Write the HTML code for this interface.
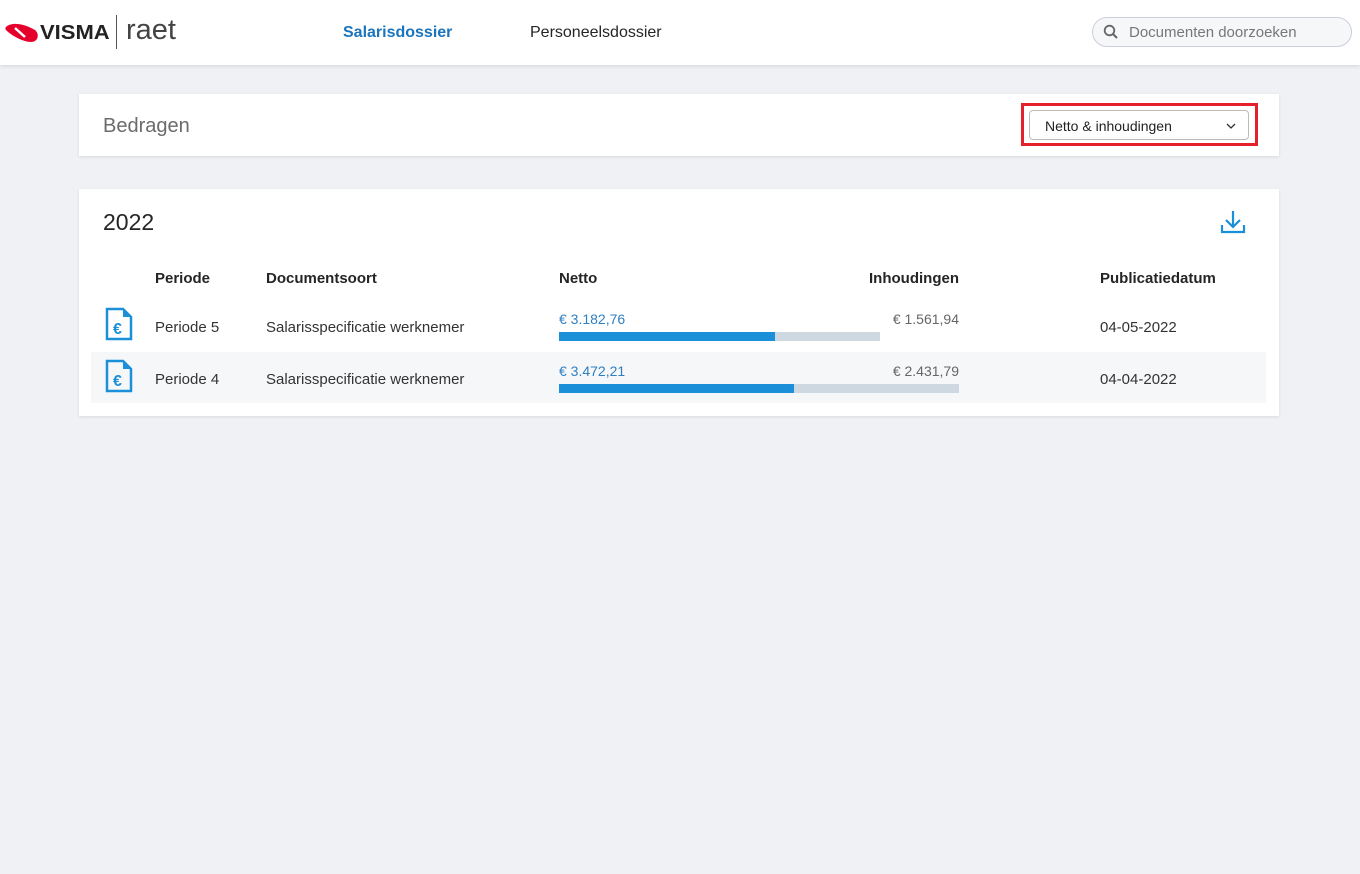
<!DOCTYPE html>
<html><head><meta charset="utf-8"><style>
*{box-sizing:border-box;margin:0;padding:0}
body{width:1360px;height:874px;background:#eff1f5;font-family:"Liberation Sans",Arial,sans-serif;color:#252525;position:relative;overflow:hidden}
.hdr{position:absolute;left:0;top:0;width:1360px;height:65px;background:#fff;box-shadow:0 1px 4px rgba(0,0,0,.12)}
.abs{position:absolute;white-space:nowrap}
.card{position:absolute;left:79px;width:1200px;background:#fff;box-shadow:0 1px 3px rgba(0,0,0,.1)}
.th{position:absolute;top:270px;font-size:15px;font-weight:bold;color:#252525}
.td{position:absolute;font-size:15px;color:#333}
.r{text-align:right;width:120px}
</style></head><body>
<div class="hdr">
 <svg class="abs" style="left:5px;top:22px" width="34" height="22" viewBox="0 0 34 22"><path d="M1 5 C6 0,18 1,30 8 C35 12,33 20,26 20 C18 20,6 13,2 9 C0 7,0 6,1 5 Z" fill="#e4002b"/><path d="M10 6 L20 15" stroke="#fff" stroke-width="2.5"/></svg>
 <div class="abs" style="left:40px;top:22px;font-size:20px;font-weight:900;color:#222;transform:scaleX(1.1);transform-origin:left">VISMA</div>
 <div class="abs" style="left:116px;top:15px;width:1px;height:34px;background:#555"></div>
 <div class="abs" style="left:126px;top:14px;font-size:29px;font-weight:300;color:#444">raet</div>
 <div class="abs" style="left:343px;top:24px;font-size:16px;font-weight:bold;color:#1b75bc">Salarisdossier</div>
 <div class="abs" style="left:530px;top:24px;font-size:16px;color:#252525">Personeelsdossier</div>
 <div class="abs" style="left:1092px;top:17px;width:260px;height:30px;border:1px solid #ccd;border-radius:15px;background:#f6f7f9"></div>
 <svg class="abs" style="left:1103px;top:24px" width="16" height="16" viewBox="0 0 16 16"><circle cx="6.5" cy="6.5" r="4.8" stroke="#666" stroke-width="1.8" fill="none"/><path d="M10 10 L14 14" stroke="#666" stroke-width="2"/></svg>
 <div class="abs" style="left:1129px;top:24px;font-size:15px;color:#777">Documenten doorzoeken</div>
</div>

<div class="card" style="top:94px;height:62px">
 <div class="abs" style="left:24px;top:21px;font-size:20px;color:#6b6b6b">Bedragen</div>
 <div class="abs" style="left:942px;top:9px;width:237px;height:43px;border:3px solid #e4202b"></div>
 <div class="abs" style="left:950px;top:16px;width:220px;height:30px;border:1px solid #bbb;border-radius:4px;background:#fff"></div>
 <div class="abs" style="left:966px;top:24px;font-size:14px;color:#222">Netto &amp; inhoudingen</div>
 <svg class="abs" style="left:1147px;top:29px" width="10" height="7" viewBox="0 0 10 7"><path d="M1 1 L5 5 L9 1" stroke="#333" stroke-width="1.3" fill="none"/></svg>
</div>

<div class="card" style="top:189px;height:227px"></div>
<div class="abs" style="left:103px;top:209px;font-size:23px;color:#252525">2022</div>
<svg class="abs" style="left:1220px;top:210px" width="26" height="25" viewBox="0 0 26 25"><path d="M13 1 V17 M6 10 L13 17 L20 10" stroke="#1b8fd8" stroke-width="2.2" fill="none"/><path d="M2 15 V22 H24 V15" stroke="#1b8fd8" stroke-width="2.2" fill="none"/></svg>

<div class="th" style="left:155px">Periode</div>
<div class="th" style="left:266px">Documentsoort</div>
<div class="th" style="left:559px">Netto</div>
<div class="th r" style="left:839px">Inhoudingen</div>
<div class="th" style="left:1100px">Publicatiedatum</div>

<div class="abs" style="left:91px;top:352px;width:1175px;height:51px;background:#f5f7f9"></div>

<svg class="abs" style="left:105px;top:307px" width="28" height="34" viewBox="0 0 28 34"><path d="M2 2 H18 L26 10 V32 H2 Z" stroke="#1b8fd8" stroke-width="2.5" fill="none"/><path d="M18 2 V10 H26" fill="#1b8fd8"/><text x="8" y="27" font-size="16" font-weight="bold" fill="#1b8fd8" font-family="Liberation Sans">€</text></svg>
<svg class="abs" style="left:105px;top:359px" width="28" height="34" viewBox="0 0 28 34"><path d="M2 2 H18 L26 10 V32 H2 Z" stroke="#1b8fd8" stroke-width="2.5" fill="none"/><path d="M18 2 V10 H26" fill="#1b8fd8"/><text x="8" y="27" font-size="16" font-weight="bold" fill="#1b8fd8" font-family="Liberation Sans">€</text></svg>

<div class="td" style="left:155px;top:319px">Periode 5</div>
<div class="td" style="left:266px;top:319px">Salarisspecificatie werknemer</div>
<div class="td" style="left:559px;top:311px;color:#2f7fc1;font-size:14px">€ 3.182,76</div>
<div class="td r" style="left:839px;top:311px;color:#666;font-size:14px">€ 1.561,94</div>
<div class="abs" style="left:559px;top:332px;width:321px;height:9px;background:#cdd8e1"></div>
<div class="abs" style="left:559px;top:332px;width:216px;height:9px;background:#1b8fd8"></div>
<div class="td" style="left:1100px;top:319px">04-05-2022</div>

<div class="td" style="left:155px;top:371px">Periode 4</div>
<div class="td" style="left:266px;top:371px">Salarisspecificatie werknemer</div>
<div class="td" style="left:559px;top:363px;color:#2f7fc1;font-size:14px">€ 3.472,21</div>
<div class="td r" style="left:839px;top:363px;color:#666;font-size:14px">€ 2.431,79</div>
<div class="abs" style="left:559px;top:384px;width:400px;height:9px;background:#cdd8e1"></div>
<div class="abs" style="left:559px;top:384px;width:235px;height:9px;background:#1b8fd8"></div>
<div class="td" style="left:1100px;top:371px">04-04-2022</div>
</body></html>
